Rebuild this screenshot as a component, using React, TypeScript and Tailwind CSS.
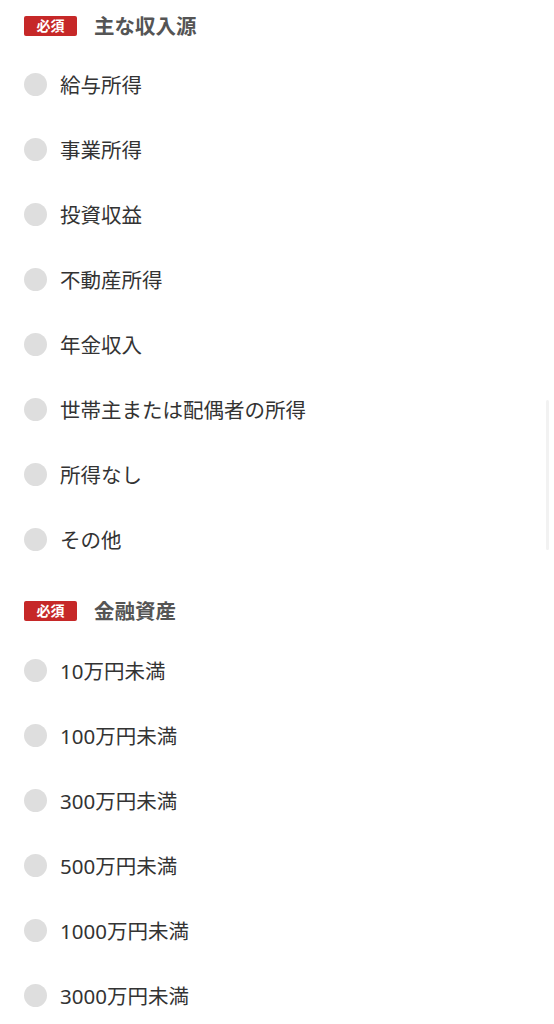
import React from "react";

const income = ["給与所得", "事業所得", "投資収益", "不動産所得", "年金収入", "世帯主または配偶者の所得", "所得なし", "その他"];
const assets = ["10万円未満", "100万円未満", "300万円未満", "500万円未満", "1000万円未満", "3000万円未満"];

function Heading({ title, className }: { title: string; className?: string }) {
  return (
    <div className={"flex items-center h-5 " + (className ?? "")}>
      <span className="flex items-center justify-center w-[53px] h-5 rounded-[2px] bg-[#c62828] text-white text-[14px] font-bold leading-none">
        必須
      </span>
      <span className="ml-[17px] text-[20.5px] font-bold text-[#555555] leading-none">{title}</span>
    </div>
  );
}

function Options({ items }: { items: string[] }) {
  return (
    <div className="flex flex-col">
      {items.map((t) => (
        <div key={t} className="flex items-center h-[65px]">
          <span className="w-[23px] h-[23px] rounded-full bg-[#dedede] shrink-0 -mt-[2px]" />
          <span className="ml-[13px] text-[20.5px] text-[#333333] leading-none">{t}</span>
        </div>
      ))}
    </div>
  );
}

export default function App() {
  return (
    <div
      className="relative w-[554px] h-[1024px] bg-white overflow-hidden px-6 pt-4"
      style={{ fontFamily: '"Noto Sans", "Noto Sans CJK JP", sans-serif' }}
    >
      <Heading title="主な収入源" />
      <div className="mt-[17px]">
        <Options items={income} />
      </div>
      <Heading title="金融資産" className="mt-[28px]" />
      <div className="mt-[18px]">
        <Options items={assets} />
      </div>
      <div className="absolute left-[546px] top-[400px] w-[3px] h-[150px] rounded-full bg-[#f2f2f2]" />
    </div>
  );
}
